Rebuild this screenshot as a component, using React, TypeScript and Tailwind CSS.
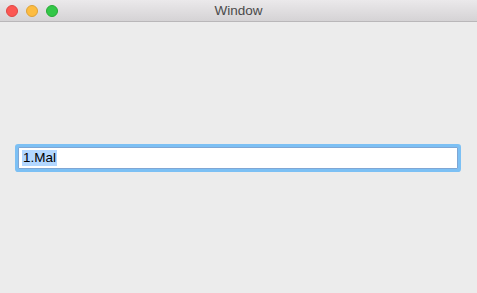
export default function App() {
  return (
    <div
      className="w-[477px] h-[293px] flex flex-col bg-[#ececec] overflow-hidden"
      style={{ fontFamily: '"Liberation Sans", Arial, sans-serif' }}
    >
      {/* title bar */}
      <div className="relative h-[22px] shrink-0 flex items-center justify-center bg-gradient-to-b from-[#ebe9eb] to-[#d5d3d5] border-b border-[#b9b7b9]">
        <div className="absolute left-[6px] top-[5px] flex gap-[8px]">
          <span className="w-[12px] h-[12px] rounded-full bg-[#fc5753] border border-[#df4744]" />
          <span className="w-[12px] h-[12px] rounded-full bg-[#fdbc40] border border-[#dea236]" />
          <span className="w-[12px] h-[12px] rounded-full bg-[#33c748] border border-[#27aa35]" />
        </div>
        <span className="text-[13.5px] text-[#4a4a4a] leading-none">Window</span>
      </div>

      {/* content */}
      <div className="flex-1 flex items-center pl-[18px] pr-[19px]">
        <div className="w-full h-[22px] bg-white border border-[#7fa6d4] rounded-[1px] shadow-[0_0_0_3px_#7cc0f4] flex items-center pl-[3px]">
          <span className="bg-[#b3d7ff] text-[13.5px] leading-[16px] text-black px-[1px]">1.Mal</span>
        </div>
      </div>
    </div>
  )
}
